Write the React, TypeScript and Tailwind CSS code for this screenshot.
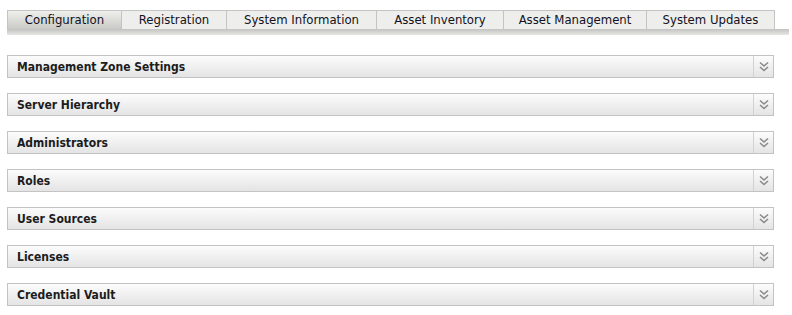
import React from "react";

const tabs = [
  { label: "Configuration", w: "w-[115px]", active: true },
  { label: "Registration", w: "w-[105px]" },
  { label: "System Information", w: "w-[150px]" },
  { label: "Asset Inventory", w: "w-[127px]" },
  { label: "Asset Management", w: "w-[143px]" },
  { label: "System Updates", w: "w-[128px]" },
];

const sections = [
  "Management Zone Settings",
  "Server Hierarchy",
  "Administrators",
  "Roles",
  "User Sources",
  "Licenses",
  "Credential Vault",
];

const DoubleChevron = () => (
  <svg width="10" height="11" viewBox="0 0 10 11" fill="none">
    <path d="M1 1.5 L5 5 L9 1.5" stroke="#8a8a8a" strokeWidth="1.6" />
    <path d="M1 6 L5 9.5 L9 6" stroke="#8a8a8a" strokeWidth="1.6" />
  </svg>
);

const Section: React.FC<{ title: string }> = ({ title }) => (
  <div className="flex h-[23px] w-[767px] border border-[#c3c3c3] bg-gradient-to-b from-[#fcfcfc] to-[#e4e4e4]">
    <div className="flex flex-1 items-center pl-[9px] text-[12px] font-bold text-[#1c1c1c]">
      {title}
    </div>
    <div className="flex w-[20px] items-center justify-center border-l border-[#d2d2d2]">
      <DoubleChevron />
    </div>
  </div>
);

export default function App() {
  return (
    <div
      className="h-[315px] w-[792px] bg-white"
      style={{ fontFamily: '"DejaVu Sans Condensed", "DejaVu Sans", sans-serif' }}
    >
      <div className="pl-[7px] pt-[10px]">
        <div className="flex">
          {tabs.map((t) => (
            <div
              key={t.label}
              className={`flex h-[19px] items-center justify-center border-t border-r border-[#c4c4c4] text-[13px] text-[#111122] ${t.w} ${
                t.active
                  ? "border-l bg-gradient-to-b from-[#efefec] to-[#c9c9c5]"
                  : "bg-[#eeeeec]"
              }`}
            >
              {t.label}
            </div>
          ))}
        </div>
        <div className="h-[6px] w-[782px] bg-gradient-to-b from-[#c2c2c0] to-[#e6e6e4]" />
        <div className="mt-[20px] flex flex-col gap-[15px]">
          {sections.map((s) => (
            <Section key={s} title={s} />
          ))}
        </div>
      </div>
    </div>
  );
}
